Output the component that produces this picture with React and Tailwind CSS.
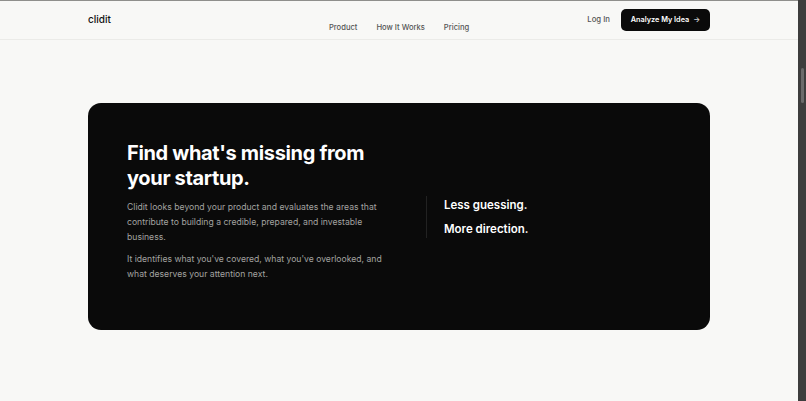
export default function App() {
  return (
    <div className="relative h-[401px] overflow-hidden bg-[#f8f8f6] font-['Inter',sans-serif]">
      <div className="h-px bg-[#8f8f8c]" />
      <div className="mr-2">
        <header className="h-[39px] border-b border-[#ebebe8]">
          <div className="mx-auto flex h-full w-[622px] items-start justify-between">
            <span className="mt-[10px] text-[10px] leading-4 font-medium text-[#111111]">clidit</span>
            <nav className="mt-[21px] ml-[100px] flex gap-[19px] text-[7.6px] leading-3 font-medium text-[#555555]">
              <a>Product</a>
              <a>How It Works</a>
              <a>Pricing</a>
            </nav>
            <div className="mt-2 flex items-center gap-[11px]">
              <a className="text-[7.75px] font-medium text-[#555555]">Log In</a>
              <button className="flex h-[22px] w-[89px] items-center justify-center gap-[4px] rounded-[5px] bg-[#0a0a0a] text-[7.3px] font-semibold text-white">
                Analyze My Idea <span className="text-[#cccccc]">→</span>
              </button>
            </div>
          </div>
        </header>
        <main className="mx-auto mt-[63px] flex h-[227px] w-[622px] items-center rounded-[13px] bg-[#0a0a0a] pl-[39px]">
          <div className="mb-[10px] w-[262px]">
            <h1 className="text-[20px] leading-[25px] font-bold tracking-[-0.017em] text-white">
              Find what's missing from your startup.
            </h1>
            <p className="mt-[9px] text-[8.65px] leading-[15px] text-[#a3a3a0]">
              Clidit looks beyond your product and evaluates the areas that contribute to building a credible, prepared, and investable business.
            </p>
            <p className="mt-[7px] text-[8.65px] leading-[15px] text-[#a3a3a0]">
              It identifies what you've covered, what you've overlooked, and what deserves your attention next.
            </p>
          </div>
          <div className="ml-[37px] flex h-[42px] flex-col justify-center gap-2 border-l border-[#222222] pl-[17px]">
            <p className="text-[11.5px] leading-4 font-semibold text-white">Less guessing.</p>
            <p className="text-[11.5px] leading-4 font-semibold text-white">More direction.</p>
          </div>
        </main>
      </div>
      <div className="absolute top-0 right-0 h-full w-2 bg-[#3d3d3d]">
        <div className="mx-auto mt-[68px] h-[35px] w-[3px] rounded-full bg-[#6b6b6b]" />
      </div>
    </div>
  );
}
